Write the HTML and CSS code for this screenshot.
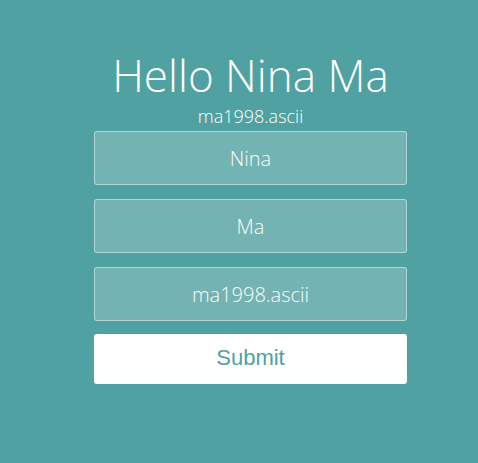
FILE: index.html
```html
<!DOCTYPE html>
<html>
<head>
<meta charset="utf-8">
<link rel="stylesheet" href="styles.css">
</head>
<body>
<div class="wrap">
  <h1 class="title">Hello Nina Ma</h1>
  <div class="sub">ma1998.ascii</div>
  <form class="form">
    <input class="field" type="text" value="Nina">
    <input class="field" type="text" value="Ma">
    <input class="field" type="text" value="ma1998.ascii">
    <button class="submit" type="button">Submit</button>
  </form>
</div>
</body>
</html>
```
FILE: styles.css
```css
html, body {
  margin: 0;
  padding: 0;
  background: #50a1a1;
  height: 100%;
}
.wrap {
  width: 313px;
  margin-left: 94px;
  padding-top: 51px;
  display: flex;
  flex-direction: column;
  align-items: center;
  font-family: "Open Sans", sans-serif;
  color: #fff;
}
.title {
  margin: 0;
  font-weight: 300;
  font-size: 44px;
  line-height: 48px;
  white-space: nowrap;
}
.sub {
  font-weight: 300;
  font-size: 18px;
  line-height: 22px;
  margin-top: 6px;
}
.form {
  display: flex;
  flex-direction: column;
  gap: 14px;
  width: 100%;
  margin-top: 4px;
}
.field {
  box-sizing: border-box;
  width: 100%;
  height: 54px;
  margin: 0;
  border: 1px solid rgba(255,255,255,0.45);
  border-radius: 3px;
  background: rgba(255,255,255,0.2);
  color: #fbfdf6;
  text-align: center;
  font-family: "Open Sans", sans-serif;
  font-weight: 300;
  font-size: 20px;
  outline: none;
}
.submit {
  box-sizing: border-box;
  width: 100%;
  height: 50px;
  margin-top: -1px;
  border: 0;
  border-radius: 3px;
  background: #fff;
  color: #50a1a1;
  font-family: "Liberation Sans", Arial, sans-serif;
  font-size: 22px;
  padding: 0 0 2px;
}
```
